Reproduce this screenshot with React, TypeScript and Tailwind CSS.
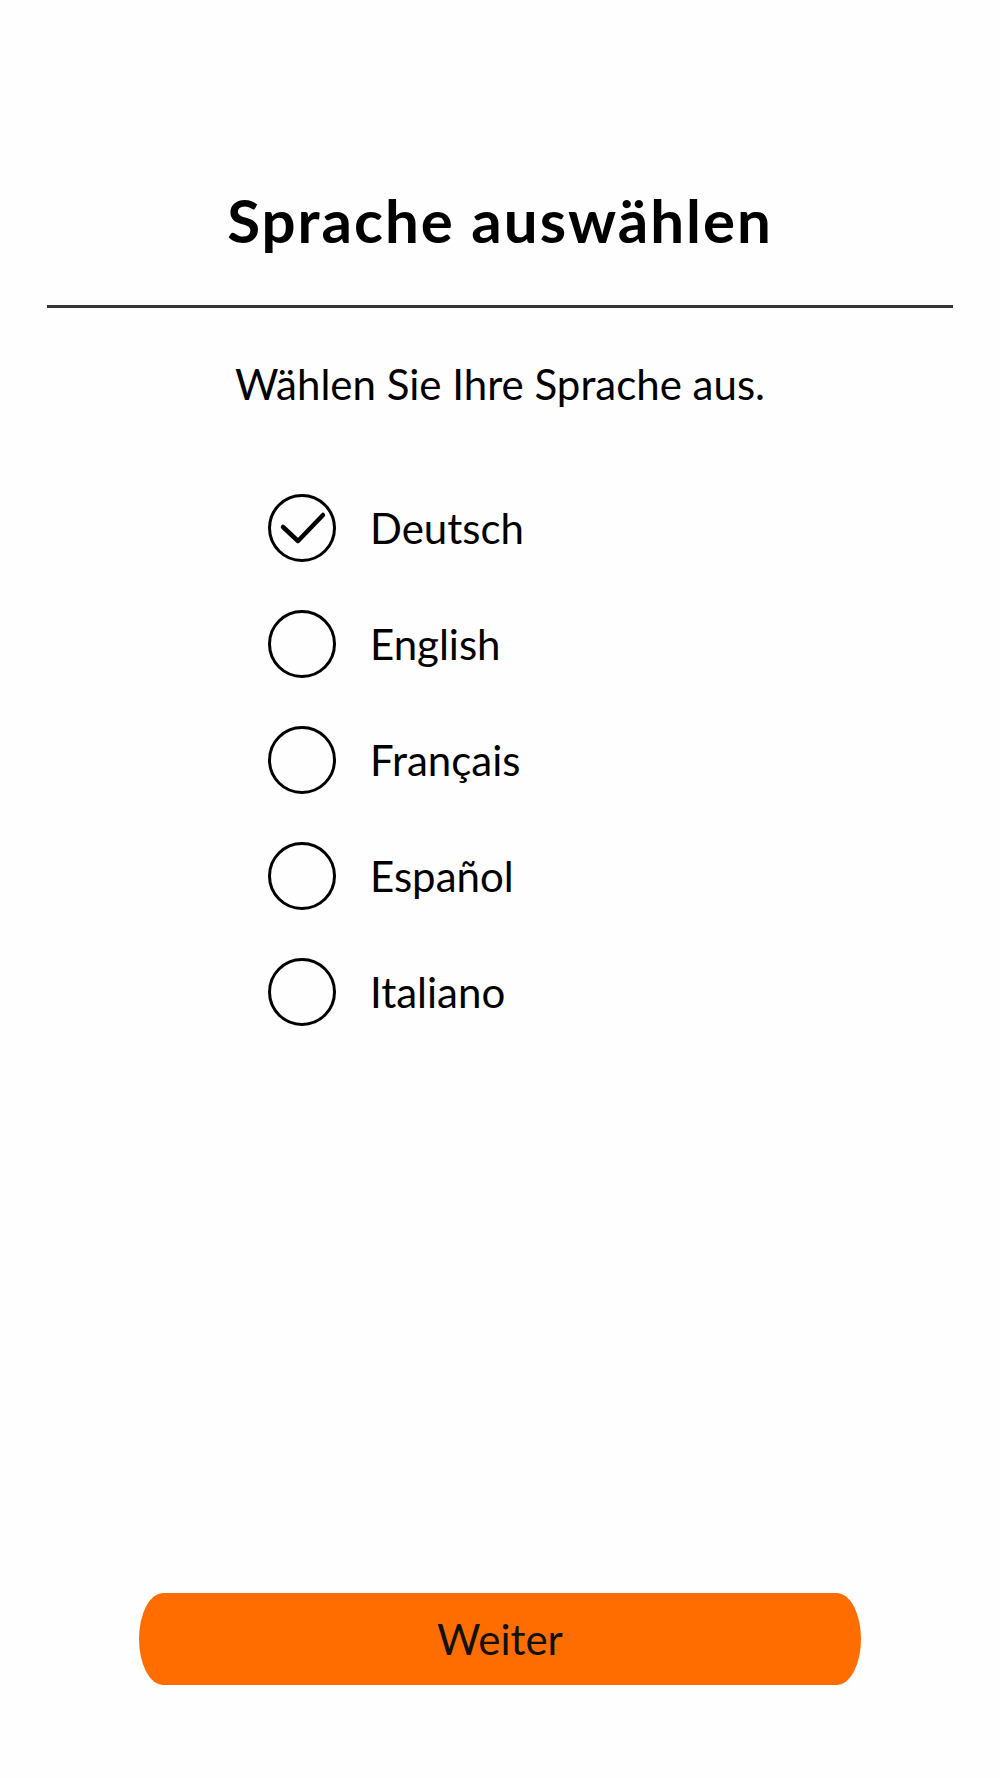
import { useState } from 'react'

const languages = ['Deutsch', 'English', 'Français', 'Español', 'Italiano']

function RadioCircle({ checked }: { checked: boolean }) {
  return (
    <div className="h-[68px] w-[68px] shrink-0 rounded-full border-[3px] border-black flex items-center justify-center">
      {checked && (
        <svg width="68" height="68" viewBox="0 0 68 68" className="shrink-0">
          <polyline
            points="15,33 30,47 55,21"
            fill="none"
            stroke="black"
            strokeWidth="4.5"
            strokeLinecap="round"
            strokeLinejoin="round"
          />
        </svg>
      )}
    </div>
  )
}

export default function App() {
  const [selected, setSelected] = useState('Deutsch')

  return (
    <div className="min-h-[1778px] bg-[#fefefe] text-black flex flex-col font-['Lato',sans-serif]">
      <h1 className="mt-[190px] text-center text-[60px] leading-[60px] font-bold tracking-[2px]">
        Sprache auswählen
      </h1>

      <div className="mx-[47px] mt-[55px] h-[3px] bg-[#353535]" />

      <p className="mt-[55px] text-center text-[42px] leading-[42px]">
        Wählen Sie Ihre Sprache aus.
      </p>

      <div className="mt-[89px] ml-[268px] flex flex-col gap-[48px]">
        {languages.map((lang) => (
          <button
            key={lang}
            onClick={() => setSelected(lang)}
            className="flex items-center gap-[34px] text-left"
          >
            <RadioCircle checked={selected === lang} />
            <span className="text-[42px] leading-[42px]">{lang}</span>
          </button>
        ))}
      </div>

      <div className="mt-auto mb-[93px] px-[139px]">
        <button className="w-full h-[92px] bg-[#ff6d00] rounded-[24px/46px] text-[42px] leading-[42px] text-[#111]">
          Weiter
        </button>
      </div>
    </div>
  )
}
